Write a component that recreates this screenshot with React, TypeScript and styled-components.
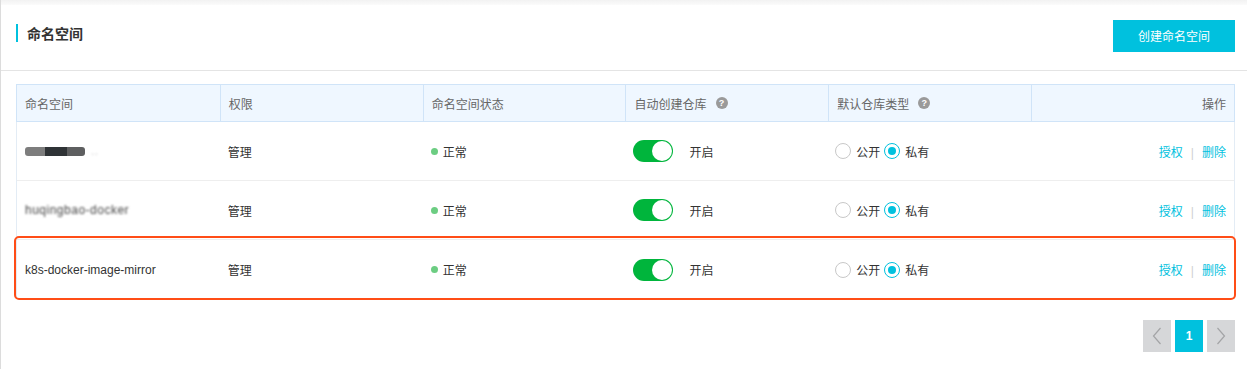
import React from 'react';
import styled, { createGlobalStyle, css } from 'styled-components';

const GlobalStyle = createGlobalStyle`
  html, body {
    margin: 0;
    padding: 0;
    background: #fff;
  }
  body {
    font-family: "Liberation Sans", "Noto Sans CJK SC", sans-serif;
    font-size: 12px;
    color: #333;
  }
`;

const Page = styled.div`
  width: 1247px;
  height: 369px;
  box-sizing: border-box;
  border-left: 1px solid #dcdcdc;
  display: flex;
  flex-direction: column;
  overflow: hidden;
`;

const TopShade = styled.div`
  height: 5px;
  background: linear-gradient(#f2f2f2, #fbfbfb);
`;

const Header = styled.div`
  height: 66px;
  box-sizing: border-box;
  border-bottom: 1px solid #e4e4e4;
  display: flex;
  align-items: center;
  justify-content: space-between;
  padding: 0 12px 4px 15px;
`;

const Title = styled.h2`
  margin: 0;
  display: flex;
  align-items: center;
  gap: 9px;
  font-size: 14px;
  font-weight: 600;
  color: #333;
  margin-top: -5px;

  &::before {
    content: '';
    width: 2px;
    height: 18px;
    background: #00c1de;
  }
`;

const PrimaryButton = styled.button`
  width: 122px;
  height: 32px;
  border: none;
  background: #00c1de;
  color: #fff;
  font-family: inherit;
  font-size: 12px;
  cursor: pointer;
`;

const Body = styled.div`
  padding: 13px 12px 0 15px;
  display: flex;
  flex-direction: column;
`;

const Grid = styled.div`
  display: flex;
  flex-direction: column;
  border-left: 1px solid #e3ecf5;
  border-right: 1px solid #e3ecf5;
`;

const Row = styled.div<{ $head?: boolean; $marked?: boolean }>`
  display: grid;
  grid-template-columns: repeat(6, 1fr);
  height: 59px;
  box-sizing: border-box;
  border-bottom: 1px solid #eeeeee;
  position: relative;

  ${(p) =>
    p.$head &&
    css`
      height: 38px;
      background: #eff7ff;
      border: 1px solid #d0e4f8;
      margin: 0 -1px;
      color: #666;
    `}

  ${(p) =>
    p.$marked &&
    css`
      border-bottom: none;
      &::after {
        content: '';
        position: absolute;
        left: -3px;
        right: -2px;
        top: -4px;
        bottom: -1px;
        border: 2px solid #ff4d17;
        border-radius: 5px;
        pointer-events: none;
      }
    `}
`;

const Cell = styled.div<{ $head?: boolean; $right?: boolean }>`
  display: flex;
  align-items: center;
  gap: 6px;
  padding: 0 8px;
  box-sizing: border-box;
  min-width: 0;
  justify-content: ${(p) => (p.$right ? 'flex-end' : 'flex-start')};
  ${(p) =>
    p.$head &&
    css`
      border-left: 1px solid #d0e4f8;
      &:first-child {
        border-left: none;
      }
    `}
`;

const Help = styled.span`
  width: 12px;
  height: 12px;
  border-radius: 50%;
  background: #9a9a9a;
  color: #fff;
  font-size: 9px;
  font-weight: 700;
  display: inline-flex;
  align-items: center;
  justify-content: center;
  margin-left: 3px;
`;

const Masked = styled.span<{ $bar?: boolean }>`
  filter: blur(1px);
  color: #444;
  letter-spacing: 0.5px;
  ${(p) =>
    p.$bar &&
    css`
      display: inline-block;
      width: 60px;
      height: 9px;
      border-radius: 3px;
      filter: blur(0.6px);
      background: linear-gradient(90deg, #7d7d7d 0 33%, #2f3336 33% 70%, #5e5f60 70%);
    `}
`;

const Dot = styled.span`
  width: 7px;
  height: 7px;
  border-radius: 50%;
  background: #6ccd82;
  margin-right: -1px;
`;

const Switch = styled.span<{ $on: boolean }>`
  width: 40px;
  height: 22px;
  box-sizing: border-box;
  border-radius: 11px;
  background: ${(p) => (p.$on ? '#00b53c' : '#ccc')};
  position: relative;
  margin-right: 10px;

  &::after {
    content: '';
    position: absolute;
    top: 1px;
    right: 1px;
    width: 20px;
    height: 20px;
    border-radius: 50%;
    background: #fff;
  }
`;

const RadioGroup = styled.div`
  display: flex;
  align-items: center;
  gap: 5px;
`;

const Radio = styled.span<{ $checked?: boolean }>`
  width: 16px;
  height: 16px;
  box-sizing: border-box;
  border-radius: 50%;
  border: 1px solid ${(p) => (p.$checked ? '#00c1de' : '#c8c8c8')};
  display: inline-flex;
  align-items: center;
  justify-content: center;
  margin-left: ${(p) => (p.$checked ? '-1px' : '-1px')};

  &::after {
    content: '';
    width: 8px;
    height: 8px;
    border-radius: 50%;
    background: ${(p) => (p.$checked ? '#00c1de' : 'transparent')};
  }
`;

const Link = styled.a`
  color: #00c1de;
  text-decoration: none;
  cursor: pointer;
`;

const Sep = styled.span`
  color: #d0d0d0;
  margin: 0 8px;
`;

const Pager = styled.div`
  display: flex;
  justify-content: flex-end;
  gap: 4px;
  margin-top: 21px;
`;

const PageBtn = styled.button<{ $active?: boolean }>`
  width: 28px;
  height: 32px;
  border: none;
  padding: 0;
  display: flex;
  align-items: center;
  justify-content: center;
  font-family: inherit;
  font-size: 12px;
  font-weight: 700;
  background: ${(p) => (p.$active ? '#00c1de' : '#d6d7d9')};
  color: #fff;
`;

type Item = { name: React.ReactNode; marked?: boolean };

const items: Item[] = [
  {
    name: (
      <>
        <Masked $bar />
        <Masked style={{ opacity: 0.25 }}>..</Masked>
      </>
    ),
  },
  { name: <Masked>huqingbao-docker</Masked> },
  { name: 'k8s-docker-image-mirror', marked: true },
];

const Chevron = ({ dir }: { dir: 'left' | 'right' }) => (
  <svg width="10" height="18" viewBox="0 0 10 18" fill="none">
    <path
      d={dir === 'left' ? 'M8.5 1 1.5 9l7 8' : 'M1.5 1l7 8-7 8'}
      stroke="#a3a4a6"
      strokeWidth="1.2"
    />
  </svg>
);

const App: React.FC = () => (
  <>
    <GlobalStyle />
    <Page>
      <TopShade />
      <Header>
        <Title>命名空间</Title>
        <PrimaryButton>创建命名空间</PrimaryButton>
      </Header>
      <Body>
        <Grid>
          <Row $head>
            <Cell $head>命名空间</Cell>
            <Cell $head>权限</Cell>
            <Cell $head>命名空间状态</Cell>
            <Cell $head>
              自动创建仓库<Help>?</Help>
            </Cell>
            <Cell $head>
              默认仓库类型<Help>?</Help>
            </Cell>
            <Cell $head $right>操作</Cell>
          </Row>
          {items.map((it, i) => (
            <Row key={i} $marked={it.marked}>
              <Cell>{it.name}</Cell>
              <Cell>管理</Cell>
              <Cell>
                <Dot />
                正常
              </Cell>
              <Cell>
                <Switch $on />
                开启
              </Cell>
              <Cell>
                <RadioGroup>
                  <Radio />
                  公开
                  <Radio $checked />
                  私有
                </RadioGroup>
              </Cell>
              <Cell $right>
                <span>
                  <Link>授权</Link>
                  <Sep>|</Sep>
                  <Link>删除</Link>
                </span>
              </Cell>
            </Row>
          ))}
        </Grid>
        <Pager>
          <PageBtn>
            <Chevron dir="left" />
          </PageBtn>
          <PageBtn $active>1</PageBtn>
          <PageBtn>
            <Chevron dir="right" />
          </PageBtn>
        </Pager>
      </Body>
    </Page>
  </>
);

export default App;
